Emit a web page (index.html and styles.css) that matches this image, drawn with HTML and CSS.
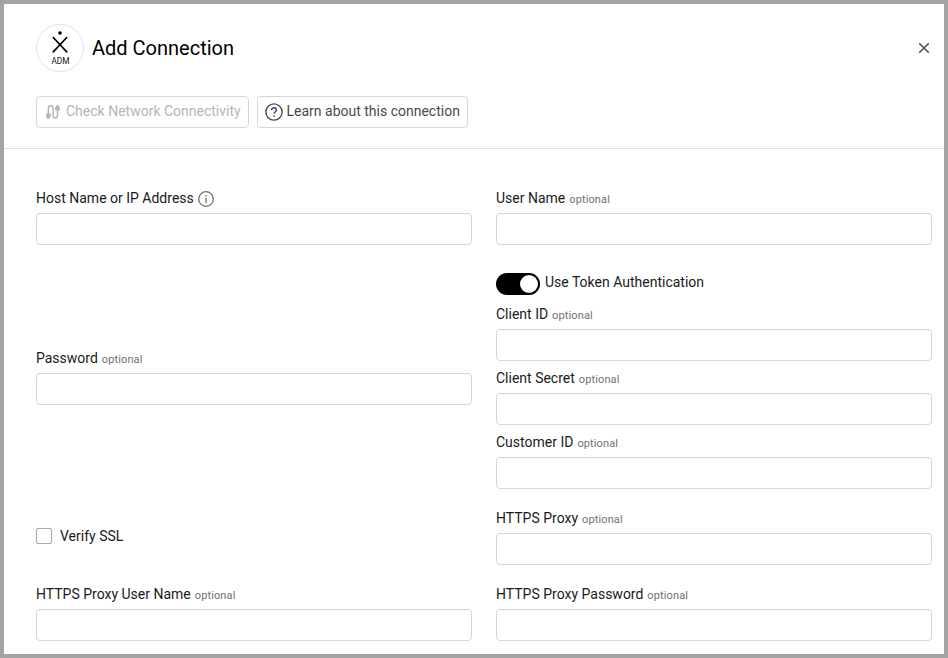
FILE: index.html
```html
<!DOCTYPE html>
<html lang="en">
<head>
<meta charset="utf-8">
<title>Add Connection</title>
<link rel="stylesheet" href="styles.css">
</head>
<body>
<main class="dialog">
  <header class="header">
    <div class="title-row">
      <div class="logo">
        <svg class="logo-mark" width="18" height="23" viewBox="0 0 18 23"><circle cx="9" cy="2" r="1.8" fill="#000"/><path d="M2.3 6.5 15.7 20.8M15.7 6.5 2.3 20.8" stroke="#000" stroke-width="1.7" stroke-linecap="round"/></svg>
        <span class="logo-text">ADM</span>
      </div>
      <h1 class="title">Add Connection</h1>
      <button class="close" aria-label="Close"><svg width="12" height="12" viewBox="0 0 12 12"><path d="M1.2 1.2l9.6 9.6M10.8 1.2 1.2 10.8" stroke="#4c4c4c" stroke-width="1.5"/></svg></button>
    </div>
    <div class="actions">
      <button class="btn btn-check" disabled>
        <svg width="16" height="16" viewBox="0 0 16 16" fill="none" stroke="#b5b5b5" stroke-width="1.5"><path d="M3.4 10.5V4.2a2.35 2.35 0 0 1 4.7 0v7.6a2.2 2.2 0 0 0 4.4 0V5"/><path d="M1 9.4h4.8v3.2L4.5 14v1H2.2v-1L1 12.6zM10.1 6.4h4.8V3.2L13.7 2V1h-2.3v1l-1.3 1.2z" fill="#b5b5b5" stroke="none"/></svg>
        <span>Check Network Connectivity</span>
      </button>
      <button class="btn btn-learn">
        <svg width="18" height="18" viewBox="0 0 18 18" fill="none" stroke="#4a4a4a" stroke-width="1.4"><circle cx="9" cy="9" r="8.1"/><path d="M6.6 7.1C6.6 5.6 7.6 4.7 9 4.7s2.4.9 2.4 2.2c0 1.7-2.3 1.9-2.3 3.8"/><circle cx="9.1" cy="12.8" r=".9" fill="#4a4a4a" stroke="none"/></svg>
        <span>Learn about this connection</span>
      </button>
    </div>
  </header>
  <form class="form">
    <div class="field">
      <label class="label" for="host">Host Name or IP Address<svg class="info" width="16" height="16" viewBox="0 0 16 16" fill="none" stroke="#707070"><circle cx="8" cy="8" r="7.3" stroke-width="1.3"/><path d="M8 6.7v5.1M8 4v1.5" stroke-width="1.3"/></svg></label>
      <input class="input" id="host">
    </div>
    <div class="field">
      <label class="label" for="user">User Name <small>optional</small></label>
      <input class="input" id="user">
    </div>
    <div class="field">
      <label class="label" for="password">Password <small>optional</small></label>
      <input class="input" id="password" type="password">
    </div>
    <div class="token-group">
      <div class="toggle-row"><span class="toggle"><span class="knob"></span></span><span class="toggle-label">Use Token Authentication</span></div>
      <div class="field">
        <label class="label" for="client-id">Client ID <small>optional</small></label>
        <input class="input" id="client-id">
      </div>
      <div class="field">
        <label class="label" for="client-secret">Client Secret <small>optional</small></label>
        <input class="input" id="client-secret">
      </div>
      <div class="field">
        <label class="label" for="customer">Customer ID <small>optional</small></label>
        <input class="input" id="customer">
      </div>
    </div>
    <label class="check-row"><input class="checkbox" type="checkbox"><span>Verify SSL</span></label>
    <div class="field">
      <label class="label" for="proxy">HTTPS Proxy <small>optional</small></label>
      <input class="input" id="proxy">
    </div>
    <div class="field">
      <label class="label" for="proxy-user">HTTPS Proxy User Name <small>optional</small></label>
      <input class="input" id="proxy-user">
    </div>
    <div class="field">
      <label class="label" for="proxy-password">HTTPS Proxy Password <small>optional</small></label>
      <input class="input" id="proxy-password" type="password">
    </div>
  </form>
</main>
</body>
</html>
```
FILE: styles.css
```css
* { box-sizing: border-box; }
body { margin: 0; background: #fff; font: 14px/20px Roboto, "Liberation Sans", sans-serif; color: #1a1a1a; }
button { font: inherit; cursor: pointer; }
svg { flex: none; }
.dialog { height: 658px; border: 4px solid #a4a4a4; overflow: hidden; }
.header { height: 145px; padding: 20px 12px 0 32px; border-bottom: 1px solid #e0e1e9; }
.title-row { display: flex; align-items: center; height: 48px; }
.logo { display: flex; flex-direction: column; align-items: center; width: 48px; height: 48px; padding-top: 6px; border: 1px solid #dfe0ea; border-radius: 50%; }
.logo-text { margin: 2px 0 0 1px; font-size: 8.3px; line-height: 10px; color: #111; }
.title { flex: 1; margin: 0 0 0 8px; font-size: 20px; line-height: 28px; font-weight: 400; color: #000; }
.close { display: flex; padding: 0; margin-right: 2px; border: 0; background: none; }
.actions { display: flex; gap: 8px; margin-top: 24px; }
.btn { display: flex; align-items: center; height: 32px; padding: 0 7px; border: 1px solid #d6d6d6; border-radius: 4px; background: #fff; color: #4a4a4a; white-space: nowrap; }
.btn span { margin-bottom: 2px; }
.btn-check { width: 213px; gap: 5px; padding-left: 8px; color: #b5b5b5; }
.btn-learn { width: 211px; gap: 3.5px; }
.form { display: grid; grid-template-columns: 436px 436px; column-gap: 24px; row-gap: 19px; align-items: center; padding: 39px 32px 0; }
.field { display: flex; flex-direction: column; gap: 5px; }
.label { display: block; height: 20px; white-space: nowrap; }
.label small { margin-left: .5px; font-size: 11px; letter-spacing: .12px; color: #707070; }
.info { margin-left: 4px; vertical-align: -4px; }
.input { width: 100%; height: 32px; margin: 0; padding: 0 8px; border: 1px solid #d6d6d6; border-radius: 4px; outline: 0; background: #fff; font: inherit; }
.token-group { display: flex; flex-direction: column; gap: 7px; }
.toggle-row { display: flex; align-items: flex-start; gap: 5px; height: 33px; padding-top: 9px; }
.toggle { display: flex; justify-content: flex-end; width: 44px; height: 22px; padding: 2px; border-radius: 11px; background: #000; }
.knob { width: 18px; height: 18px; border-radius: 50%; background: #fff; }
.toggle-label { margin-top: -1px; }
.check-row { display: flex; align-items: center; gap: 8px; padding-bottom: 1px; }
.checkbox { appearance: none; width: 16px; height: 16px; margin: 0; border: 1px solid #a9a9a9; border-radius: 2px; background: #fff; }
```
